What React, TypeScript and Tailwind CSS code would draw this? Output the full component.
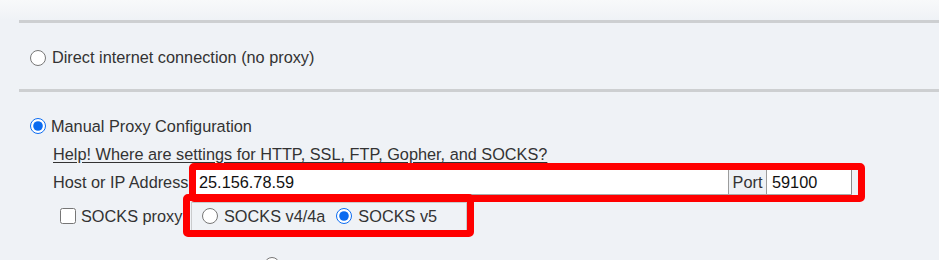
import React from 'react';

function Radio({ checked = false }: { checked?: boolean }) {
    return (
        <input
            type="radio"
            defaultChecked={checked}
            className="m-0 h-[16px] w-[16px] shrink-0 accent-[#0b6bf0]"
        />
    );
}

export default function App() {
    return (
        <div className="relative h-[260px] overflow-hidden bg-[#eff2f6] font-['Liberation_Sans',Arial,sans-serif] text-[16.3px] leading-none text-[#333]">
            <div className="h-[20px] bg-gradient-to-b from-[#f8f9fa] to-[#eff2f6]" />
            <div className="ml-[19px] h-[3px] bg-[#cdcfd1]" />

            <label className="flex h-[66px] items-center gap-[6px] pl-[30px] pt-[3px]">
                <Radio />
                <span>Direct internet connection (no proxy)</span>
            </label>

            <div className="ml-[19px] h-[3px] bg-[#cdcfd1]" />

            <label className="mt-[23px] flex h-[22px] items-center gap-[5px] pl-[30px]">
                <Radio checked />
                <span>Manual Proxy Configuration</span>
            </label>

            <div className="mt-[6px] flex h-[22px] items-center pl-[53px]">
                <a className="text-[#333] underline underline-offset-2">
                    Help! Where are settings for HTTP, SSL, FTP, Gopher, and SOCKS?
                </a>
            </div>

            <div className="mt-[2px] flex h-[30px] items-center pl-[53px]">
                <span className="w-[136px] whitespace-nowrap">Host or IP Address</span>
                <div className="flex h-[26px] items-stretch border-y border-[#a9a9a9]">
                    <div className="flex w-[539px] items-center border-l border-[#a9a9a9] bg-white pl-[9px] text-[#111]">
                        25.156.78.59
                    </div>
                    <div className="flex w-[39px] items-center justify-center border-x border-[#9c9c9c] bg-[#eef1f5]">
                        Port
                    </div>
                    <div className="flex w-[85px] items-center border-r border-[#8a8a8a] bg-white pl-[5px] text-[#111]">
                        59100
                    </div>
                </div>
            </div>

            <div className="mt-[4px] flex h-[30px] items-center pl-[60px]">
                <input type="checkbox" className="m-0 h-[16px] w-[16px] shrink-0" />
                <span className="ml-[5px] w-[110px] whitespace-nowrap">SOCKS proxy</span>
                <div className="flex h-[29px] w-[276px] items-center border border-[#c9cbcd] pl-[10px]">
                    <label className="flex items-center gap-[6px] whitespace-nowrap">
                        <Radio />
                        <span>SOCKS v4/4a</span>
                    </label>
                    <label className="ml-[11px] flex items-center gap-[6px] whitespace-nowrap">
                        <Radio checked />
                        <span>SOCKS v5</span>
                    </label>
                </div>
            </div>

            <div className="mt-[26px] pl-[264px]">
                <Radio />
            </div>

            {/* annotation boxes */}
            <div className="absolute left-[189px] top-[163px] h-[39px] w-[676px] rounded-[5px] border-[7px] border-[#ff0000]" />
            <div className="absolute left-[183px] top-[194px] h-[43px] w-[291px] rounded-[5px] border-[7px] border-[#ff0000]" />
        </div>
    );
}
